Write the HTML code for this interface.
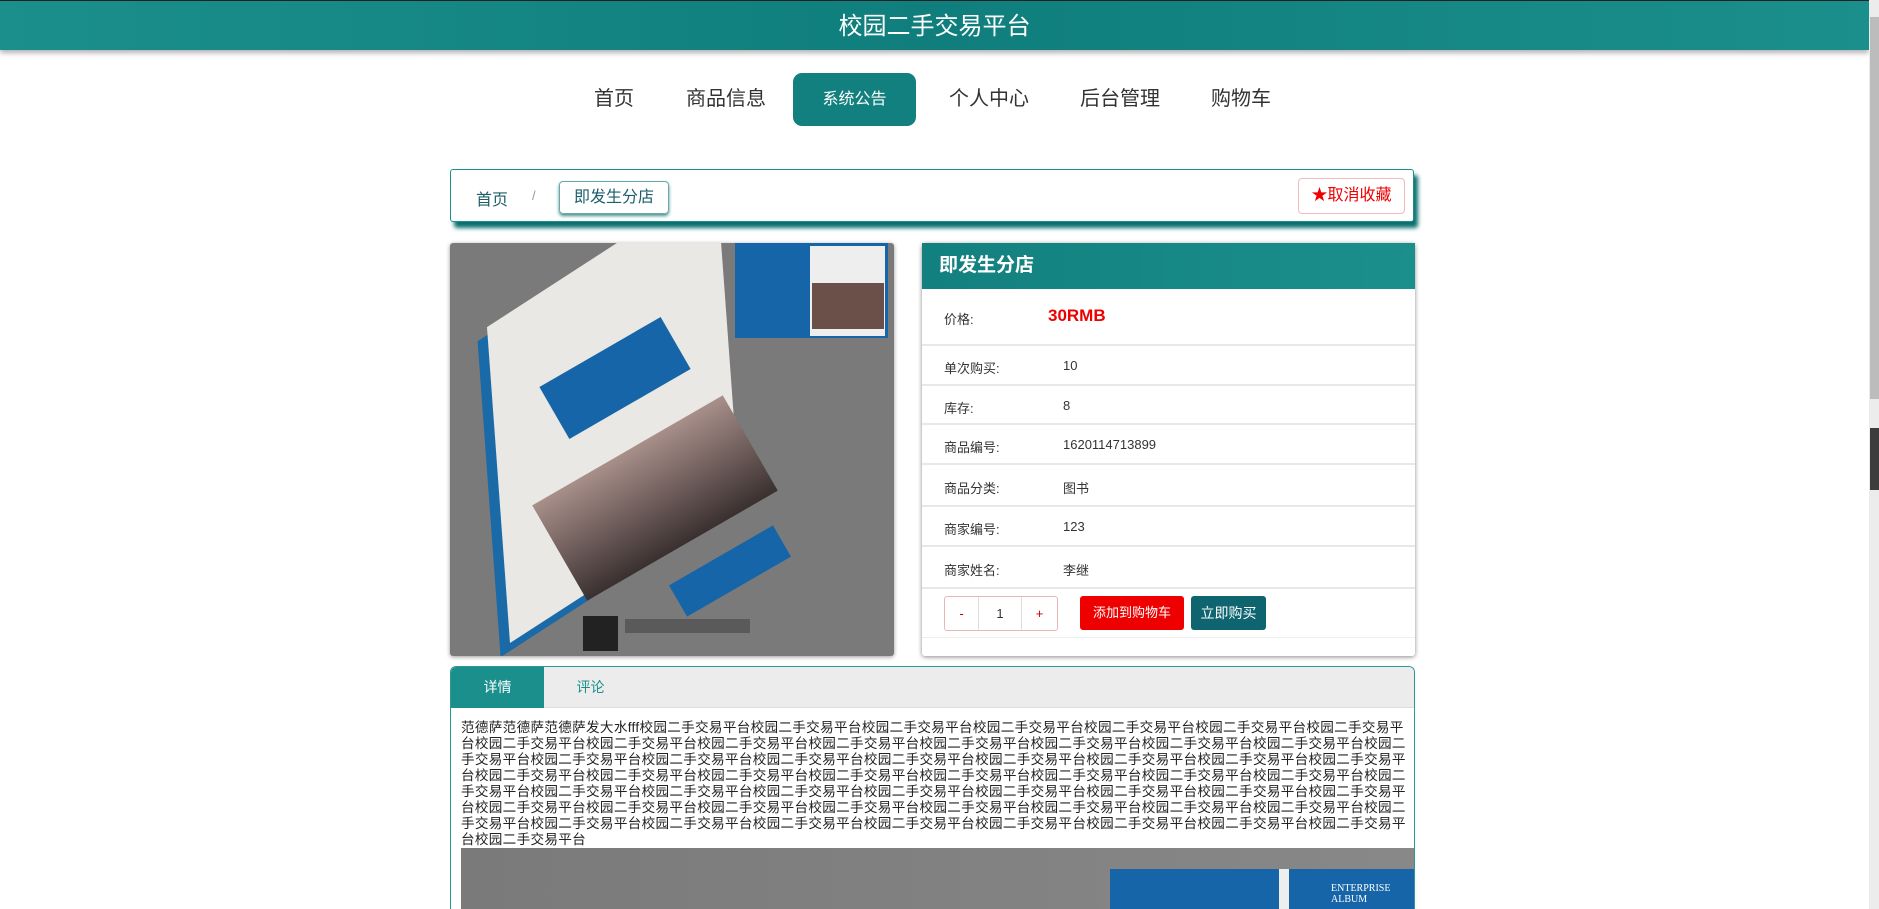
<!DOCTYPE html>
<html><head><meta charset="utf-8"><style>
*{margin:0;padding:0;box-sizing:border-box}
html,body{width:1879px;height:909px;overflow:hidden}
body{background:#fff;font-family:"Liberation Sans","Noto Sans CJK SC",sans-serif;position:relative;color:#333}
.hdr{position:absolute;left:0;top:0;width:1869px;height:50px;background:linear-gradient(90deg,#1b8f8c,#0f7e7c 50%,#1b8f8c);box-shadow:0 3px 5px rgba(0,0,0,.3);color:#fff;font-size:24px;text-align:center;line-height:52px;border-top:1px solid #222}
.nav a{position:absolute;top:73px;height:53px;line-height:53px;font-size:20px;color:#333}
.nav .act{left:793px;width:123px;background:#12807e;border-radius:9px;color:#fff;font-size:16px;text-align:center}
.sb{position:absolute;left:1869px;top:0;width:10px;height:909px;background:#ececec}
.box{position:absolute;background:#fff}
.bc{left:450px;top:169px;width:964px;height:53px;border:1px solid #1b8f8c;border-radius:3px;box-shadow:4px 6px 4px #0c6f6e}
.row{position:absolute;left:0;width:100%;border-bottom:2px solid #e8e8e8;font-size:13px}
.row .k{position:absolute;left:22px}
.row .v{position:absolute;left:141px}
.txt{position:absolute;left:461px;top:720px;width:946px;font-size:13.6px;letter-spacing:.3px;line-height:16px;color:#222;word-break:break-all}
</style></head><body>
<div class="hdr">校园二手交易平台</div>
<div class="nav">
<a style="left:594px">首页</a><a style="left:686px">商品信息</a><a class="act">系统公告</a><a style="left:949px">个人中心</a><a style="left:1080px">后台管理</a><a style="left:1211px">购物车</a>
</div>
<div class="box bc">
<span style="position:absolute;left:25px;top:16px;font-size:16px;color:#1b5e6a">首页</span>
<span style="position:absolute;left:81px;top:18px;font-size:13px;color:#999">/</span>
<span style="position:absolute;left:108px;top:11px;width:110px;height:33px;white-space:nowrap;border:1px solid #6aa;border-radius:4px;box-shadow:0 2px 3px #4a8f8f;font-size:16px;line-height:31px;text-align:center;color:#1b5e6a">即发生分店</span>
<span style="position:absolute;right:8px;top:8px;width:107px;height:36px;white-space:nowrap;border:1px solid #f4b8b8;border-radius:4px;font-size:16px;line-height:34px;text-align:center;color:#e00">★取消收藏</span>
</div>
<div class="box" style="left:450px;top:243px;width:444px;height:413px;background:#7a7a7a;overflow:hidden;box-shadow:0 1px 4px #999;border-radius:3px">
<div style="position:absolute;left:285px;top:0;width:153px;height:95px;background:#1565a8"></div>
<div style="position:absolute;left:360px;top:3px;width:75px;height:90px;background:#eee"></div>
<div style="position:absolute;left:362px;top:40px;width:72px;height:46px;background:#6a5048"></div>
<div style="position:absolute;left:60px;top:70px;width:230px;height:330px;background:#eae8e4;transform:skewY(-30deg) rotate(-4deg);transform-origin:0 100%;box-shadow:-10px 8px 0 #1b6aa8"></div>
<div style="position:absolute;left:95px;top:105px;width:140px;height:60px;background:#1565a8;transform:rotate(-30deg)"></div>
<div style="position:absolute;left:95px;top:200px;width:220px;height:110px;background:linear-gradient(#a88f8a,#3a3030);transform:rotate(-30deg)"></div>
<div style="position:absolute;left:220px;top:310px;width:120px;height:36px;background:#1565a8;transform:rotate(-30deg)"></div>
<div style="position:absolute;left:133px;top:373px;width:35px;height:35px;background:#222"></div>
<div style="position:absolute;left:175px;top:376px;width:125px;height:14px;background:#5a5a5a"></div>
</div>
<div class="box" style="left:922px;top:243px;width:493px;height:413px;box-shadow:0 1px 5px #888;border-radius:3px">
<div style="height:46px;background:linear-gradient(90deg,#12807e,#1b8f8c);color:#fff;font-size:19px;font-weight:bold;line-height:46px;padding-left:17px">即发生分店</div>
<div class="row" style="top:46px;height:57px"><span class="k" style="top:20px">价格:</span><span class="v" style="left:126px;top:17px;font-size:17px;font-weight:bold;color:#e00">30RMB</span></div>
<div class="row" style="top:103px;height:40px"><span class="k" style="top:12px">单次购买:</span><span class="v" style="top:12px">10</span></div>
<div class="row" style="top:143px;height:39px"><span class="k" style="top:12px">库存:</span><span class="v" style="top:12px">8</span></div>
<div class="row" style="top:182px;height:40px"><span class="k" style="top:12px">商品编号:</span><span class="v" style="top:12px">1620114713899</span></div>
<div class="row" style="top:222px;height:42px"><span class="k" style="top:13px">商品分类:</span><span class="v" style="top:13px">图书</span></div>
<div class="row" style="top:264px;height:40px"><span class="k" style="top:12px">商家编号:</span><span class="v" style="top:12px">123</span></div>
<div class="row" style="top:304px;height:42px"><span class="k" style="top:13px">商家姓名:</span><span class="v" style="top:13px">李继</span></div>
<div class="row" style="top:346px;height:49px;border-bottom:1px solid #eee">
<div style="position:absolute;left:22px;top:7px;width:114px;height:35px;border:1px solid #e8b8b8;border-radius:3px;display:flex;font-size:13px;line-height:33px;text-align:center"><span style="width:33px;color:#c00">-</span><span style="width:44px;border-left:1px solid #ddd;border-right:1px solid #ddd">1</span><span style="width:35px;color:#c00">+</span></div>
<div style="position:absolute;left:158px;top:7px;width:104px;height:34px;background:#e00;color:#fff;border-radius:3px;font-size:13px;line-height:34px;text-align:center">添加到购物车</div>
<div style="position:absolute;left:269px;top:7px;width:75px;height:34px;background:#0e6570;color:#fff;border-radius:3px;font-size:14px;line-height:34px;text-align:center">立即购买</div>
</div>
</div>
<div class="box" style="left:450px;top:666px;width:965px;height:243px;border:1px solid #2a9a96;border-bottom:none;border-radius:6px 6px 0 0;overflow:hidden">
<div style="height:41px;background:#ececec;border-bottom:1px solid #ddd;font-size:14px;line-height:41px">
<span style="display:inline-block;width:93px;background:#1b8f8c;color:#fff;text-align:center">详情</span><span style="display:inline-block;width:93px;color:#1b8f8c;text-align:center">评论</span></div>
</div>
<div class="txt">范德萨范德萨范德萨发大水fff校园二手交易平台校园二手交易平台校园二手交易平台校园二手交易平台校园二手交易平台校园二手交易平台校园二手交易平台校园二手交易平台校园二手交易平台校园二手交易平台校园二手交易平台校园二手交易平台校园二手交易平台校园二手交易平台校园二手交易平台校园二手交易平台校园二手交易平台校园二手交易平台校园二手交易平台校园二手交易平台校园二手交易平台校园二手交易平台校园二手交易平台校园二手交易平台校园二手交易平台校园二手交易平台校园二手交易平台校园二手交易平台校园二手交易平台校园二手交易平台校园二手交易平台校园二手交易平台校园二手交易平台校园二手交易平台校园二手交易平台校园二手交易平台校园二手交易平台校园二手交易平台校园二手交易平台校园二手交易平台校园二手交易平台校园二手交易平台校园二手交易平台校园二手交易平台校园二手交易平台校园二手交易平台校园二手交易平台校园二手交易平台校园二手交易平台校园二手交易平台校园二手交易平台校园二手交易平台校园二手交易平台校园二手交易平台校园二手交易平台校园二手交易平台校园二手交易平台校园二手交易平台校园二手交易平台</div>
<div style="position:absolute;left:461px;top:848px;width:953px;height:61px;background:linear-gradient(90deg,#7a7a7a,#888);overflow:hidden">
<div style="position:absolute;left:649px;top:21px;width:304px;height:60px;background:#1565a8"></div>
<div style="position:absolute;left:818px;top:21px;width:10px;height:60px;background:#eee"></div>
<div style="position:absolute;left:870px;top:35px;font-family:'Liberation Serif',serif;font-size:10px;color:#fff;line-height:11px">ENTERPRISE<br>ALBUM</div>
</div>
<div class="sb"><div style="position:absolute;left:1px;top:17px;width:9px;height:382px;background:#bcbcbc"></div><div style="position:absolute;left:1px;top:428px;width:9px;height:62px;background:#3c3c3c"></div></div>
</body></html>
